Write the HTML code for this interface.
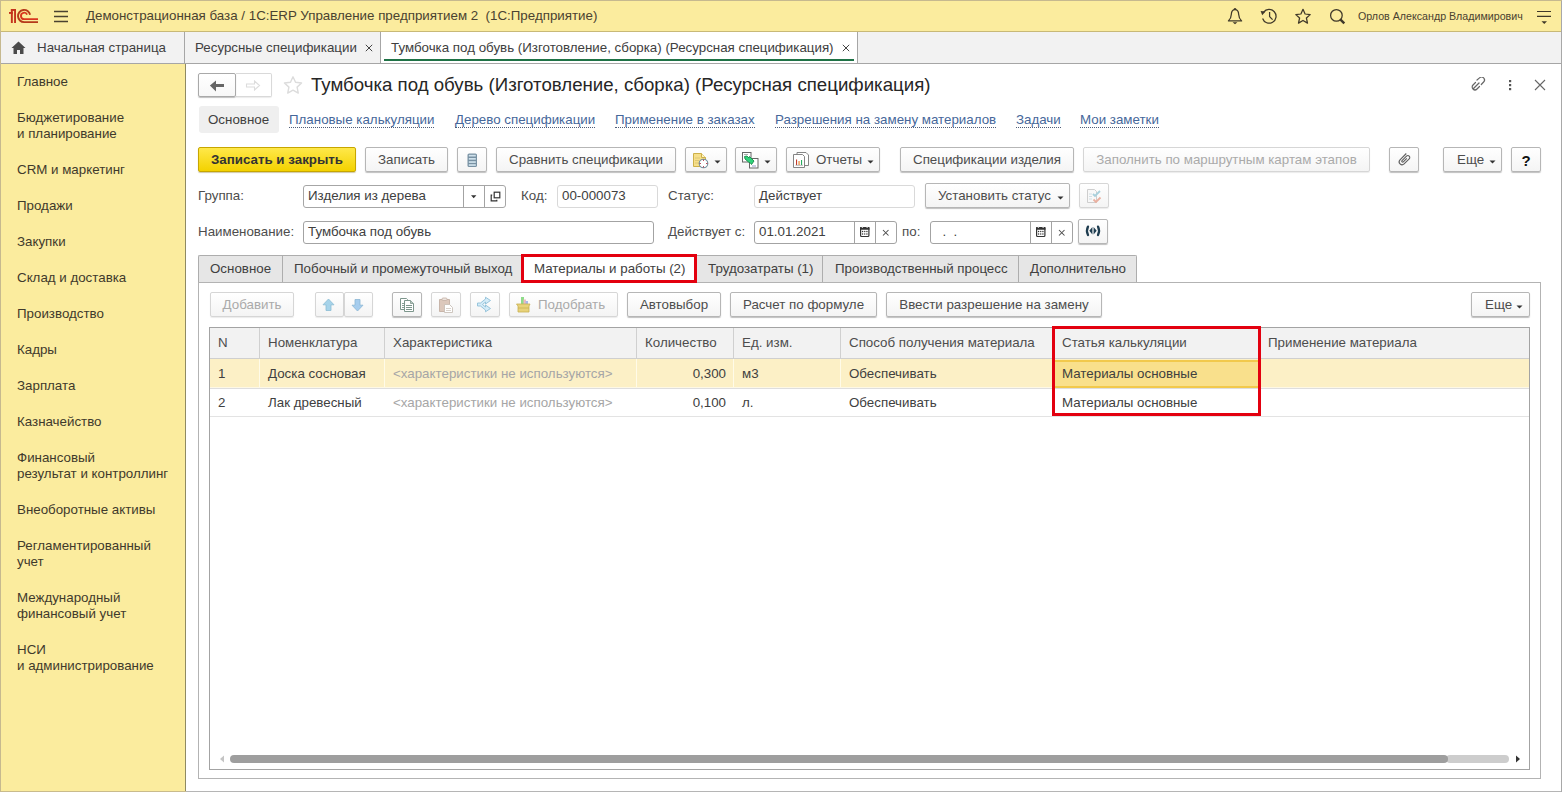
<!DOCTYPE html>
<html><head><meta charset="utf-8">
<style>
*{box-sizing:border-box;margin:0;padding:0}
html,body{width:1562px;height:792px;overflow:hidden;background:#fff}
body{font-family:"Liberation Sans",sans-serif;font-size:13.33px;color:#4d4d4d;position:relative}
.a{position:absolute;white-space:nowrap}
.hdr{left:0;top:0;width:1562px;height:32px;background:#fbec9e;border-bottom:1px solid #c8b977}
.tabs{left:0;top:32px;width:1562px;height:32px;background:#f2f2f2;border-bottom:1px solid #a6a6a6}
.side{left:0;top:64px;width:186px;height:728px;background:#fbec9e;border-right:1px solid #8f8a62}
.side .it{position:absolute;left:17px;margin-top:1px;line-height:16px;color:#3f3a2c}
.btn{position:absolute;height:25px;border:1px solid #b6b6b6;border-radius:2px;background:linear-gradient(#ffffff,#f4f4f4);box-shadow:0 1px 1px rgba(0,0,0,.25);color:#4d4d4d;text-align:center;line-height:23px;white-space:nowrap}
.btn.dis{color:#aaa;border-color:#d6d6d6;box-shadow:0 1px 1px rgba(0,0,0,.08)}
.inp{position:absolute;height:22px;border:1px solid #a6a6a6;border-radius:3px;background:#fff;line-height:20px;padding-left:4px;color:#404040;white-space:nowrap}
.lbl{position:absolute;line-height:22px;color:#4d4d4d;white-space:nowrap}
.lnk{position:absolute;line-height:15px;color:#46679a;border-bottom:1px dotted #4f5d78;white-space:nowrap}
.tab{position:absolute;top:255px;height:27px;background:#e6e6e6;border-top:1px solid #adadad;border-left:1px solid #adadad;line-height:25px;color:#404040;white-space:nowrap;padding-left:11px}
.th{position:absolute;top:328px;height:30px;line-height:29px;background:#f2f2f2;border-right:1px solid #d0d0d0;color:#4d4d4d;padding-left:8px;white-space:nowrap}
.td{position:absolute;line-height:28px;color:#404040;white-space:nowrap}
</style></head><body>

<!-- header -->
<div class="a hdr"></div>
<svg class="a" style="left:0;top:0" width="45" height="32" viewBox="0 0 45 32">
  <g fill="#c4331c">
    <rect x="10.9" y="9" width="1.9" height="14"/>
    <rect x="14.1" y="9" width="1.9" height="14"/>
    <rect x="10.9" y="9" width="5" height="1.9"/>
    <rect x="9" y="12" width="3.8" height="1.9"/>
  </g>
  <path d="M30.1,14.8 A6.1,6.1 0 1 0 24.1,22.1 H38" fill="none" stroke="#b53a1a" stroke-width="1.9"/>
  <path d="M27.1,14.6 A3.2,3.2 0 1 0 24.1,19.1 H38" fill="none" stroke="#d9361f" stroke-width="1.9"/>
</svg>
<svg class="a" style="left:54px;top:10px" width="15" height="13" viewBox="0 0 15 13">
  <g stroke="#4a4230" stroke-width="1.3"><path d="M0,1.5H14M0,6.5H14M0,11.5H14"/></g>
</svg>
<div class="a" style="left:86px;top:0;line-height:32px;color:#4a4230">Демонстрационная база / 1С:ERP Управление предприятием 2&nbsp; (1С:Предприятие)</div>

<!-- header right icons -->
<svg class="a" style="left:1226px;top:7px" width="130" height="19" viewBox="0 0 130 19">
  <g fill="none" stroke="#3f3829" stroke-width="1.25" stroke-linejoin="round">
    <path d="M9,2.6 C6.3,2.6 5.4,5 5.3,7.5 C5.2,10.5 4.6,12 2.4,13.9 H15.6 C13.4,12 12.8,10.5 12.7,7.5 C12.6,5 11.7,2.6 9,2.6 Z"/>
    <path d="M37.6,5.2 A6.9,6.9 0 1 1 36.6,11.5"/>
    <path d="M43.6,5 V9.6 L46.6,12.6"/>
    <path d="M77,2.3 L79.1,7 L84.2,7.6 L80.4,11 L81.5,16.1 L77,13.5 L72.5,16.1 L73.6,11 L69.8,7.6 L74.9,7 Z"/>
    <circle cx="110.4" cy="8.4" r="5.8"/>
  </g>
  <path d="M7.9,1.2 h2.2 v1.6 h-2.2z" fill="#3f3829"/>
  <path d="M6.6,15.3 h4.8 l-2.4,2z" fill="#3f3829"/>
  <path d="M34.6,4 L39.6,4.6 L36.2,8.3 Z" fill="#3f3829"/>
  <path d="M114.3,12.3 L118.3,16.3" stroke="#3f3829" stroke-width="2.4"/>
</svg>
<div class="a" style="left:1358px;top:0;line-height:32px;font-size:10.67px;color:#4a4230">Орлов Александр Владимирович</div>
<svg class="a" style="left:1536px;top:9px" width="16" height="16" viewBox="0 0 16 16">
  <g stroke="#3f3829" stroke-width="1.2"><path d="M1,2.5H15M1,7.4H15"/></g>
  <path d="M5.5,12.2 h5.5 l-2.75,2.8z" fill="#3f3829"/>
</svg>


<!-- tab bar -->
<div class="a tabs"></div>
<svg class="a" style="left:11px;top:41px" width="15" height="14" viewBox="0 0 15 14">
  <path d="M7.5,0.5 L14.5,7 H12.5 V13 H9 V9 H6 V13 H2.5 V7 H0.5 Z" fill="#4b4b4b"/>
</svg>
<div class="a" style="left:37px;top:32px;line-height:31px;color:#404040">Начальная страница</div>
<div class="a" style="left:184px;top:32px;width:1px;height:31px;background:#a6a6a6"></div>
<div class="a" style="left:195px;top:32px;line-height:31px;color:#404040">Ресурсные спецификации</div>
<svg class="a" style="left:365px;top:44px" width="8" height="8" viewBox="0 0 8 8"><path d="M0.8,0.8 L7.2,7.2 M7.2,0.8 L0.8,7.2" stroke="#444" stroke-width="1"/></svg>
<div class="a" style="left:380px;top:32px;width:1px;height:31px;background:#a6a6a6"></div>
<div class="a" style="left:381px;top:32px;width:476px;height:31px;background:#fff"></div>
<div class="a" style="left:391px;top:32px;line-height:31px;color:#404040">Тумбочка под обувь (Изготовление, сборка) (Ресурсная спецификация)</div>
<svg class="a" style="left:842px;top:44px" width="8" height="8" viewBox="0 0 8 8"><path d="M0.8,0.8 L7.2,7.2 M7.2,0.8 L0.8,7.2" stroke="#444" stroke-width="1"/></svg>
<div class="a" style="left:384px;top:59px;width:470px;height:2px;background:#1f7246"></div>
<div class="a" style="left:857px;top:32px;width:1px;height:31px;background:#a6a6a6"></div>

<!-- sidebar -->
<div class="a side">
  <div class="it" style="top:9px">Главное</div>
  <div class="it" style="top:45px">Бюджетирование<br>и планирование</div>
  <div class="it" style="top:97px">CRM и маркетинг</div>
  <div class="it" style="top:133px">Продажи</div>
  <div class="it" style="top:169px">Закупки</div>
  <div class="it" style="top:205px">Склад и доставка</div>
  <div class="it" style="top:241px">Производство</div>
  <div class="it" style="top:277px">Кадры</div>
  <div class="it" style="top:313px">Зарплата</div>
  <div class="it" style="top:349px">Казначейство</div>
  <div class="it" style="top:385px">Финансовый<br>результат и контроллинг</div>
  <div class="it" style="top:437px">Внеоборотные активы</div>
  <div class="it" style="top:473px">Регламентированный<br>учет</div>
  <div class="it" style="top:525px">Международный<br>финансовый учет</div>
  <div class="it" style="top:577px">НСИ<br>и администрирование</div>
</div>

<!-- FORM -->

<!-- nav buttons -->
<div class="a" style="left:236px;top:73px;width:36px;height:24px;border:1px solid #d9d9d9;border-left:none;border-radius:0 2px 2px 0;background:#fff;box-shadow:0 1px 1px rgba(0,0,0,.08)"></div>
<div class="a" style="left:198px;top:73px;width:38px;height:24px;border:1px solid #a9a9a9;border-radius:2px;background:linear-gradient(#fff,#f7f7f7);box-shadow:0 1px 1px rgba(0,0,0,.25)"></div>
<svg class="a" style="left:205px;top:77px" width="24" height="18" viewBox="0 0 24 18"><path d="M4.9,8.5 L11,3.6 V6.9 H19 V9.9 H11 V14.6 Z" fill="#666"/></svg>
<svg class="a" style="left:242px;top:77px" width="24" height="18" viewBox="0 0 24 18"><path d="M4.5,7 H12.5 V4 L17.5,8.5 L12.5,13 V10 H4.5 Z" fill="none" stroke="#dcdcdc" stroke-width="1.1"/></svg>
<svg class="a" style="left:283px;top:75px" width="20" height="21" viewBox="0 0 20 21"><path d="M10.00,1.80 L12.53,7.32 L18.56,8.02 L14.09,12.13 L15.29,18.08 L10.00,15.10 L4.71,18.08 L5.91,12.13 L1.44,8.02 L7.47,7.32 Z" fill="none" stroke="#dcdcdc" stroke-width="1.4" stroke-linejoin="round"/></svg>
<div class="a" style="left:311px;top:70px;line-height:30px;font-size:18.67px;color:#262626">Тумбочка под обувь (Изготовление, сборка) (Ресурсная спецификация)</div>
<svg class="a" style="left:1470px;top:77px" width="20" height="18" viewBox="0 0 20 18"><g fill="none" stroke="#666" stroke-width="1.2" stroke-linecap="round"><path d="M3.5,11.5 L9,6"/><path d="M7,3 L9.5,0.9 A2.6,2.6 0 0 1 13.6,5 L11.3,7.5"/><path d="M5.5,5.5 L3,8 A2.6,2.6 0 0 0 7,12 L9.5,9.5"/></g></svg>
<svg class="a" style="left:1506px;top:77px" width="8" height="16" viewBox="0 0 8 16"><g fill="#555"><rect x="3" y="3" width="2.2" height="2.2"/><rect x="3" y="7" width="2.2" height="2.2"/><rect x="3" y="11" width="2.2" height="2.2"/></g></svg>
<svg class="a" style="left:1532px;top:77px" width="16" height="16" viewBox="0 0 16 16"><path d="M3,3 L13,13 M13,3 L3,13" stroke="#666" stroke-width="1.1"/></svg>

<!-- links row -->
<div class="a" style="left:199px;top:106px;width:80px;height:27px;background:#efefef;border-radius:3px"></div>
<div class="a" style="left:208px;top:106px;line-height:27px;color:#404040">Основное</div>
<div class="lnk" style="left:289px;top:112px">Плановые калькуляции</div>
<div class="lnk" style="left:455px;top:112px">Дерево спецификации</div>
<div class="lnk" style="left:615px;top:112px">Применение в заказах</div>
<div class="lnk" style="left:775px;top:112px">Разрешения на замену материалов</div>
<div class="lnk" style="left:1016px;top:112px">Задачи</div>
<div class="lnk" style="left:1080px;top:112px">Мои заметки</div>

<!-- command bar -->
<div class="btn" style="left:198px;top:147px;width:158px;background:linear-gradient(#ffe84a,#f3d200);border-color:#c7a600;color:#333;font-weight:bold;box-shadow:0 1px 1px rgba(120,100,0,.35)">Записать и закрыть</div>
<div class="btn" style="left:365px;top:147px;width:83px">Записать</div>
<div class="btn" style="left:457px;top:147px;width:30px"></div>
<svg class="a" style="left:467px;top:153px" width="11" height="15" viewBox="0 0 11 15"><rect x="0.5" y="0.5" width="9.5" height="13.5" rx="1.6" fill="#7891a3"/><g fill="#cfe1ec"><rect x="1.8" y="1.8" width="7" height="1.7"/><rect x="1.8" y="5" width="7" height="1.7"/><rect x="1.8" y="8.2" width="7" height="1.7"/><rect x="1.8" y="11.2" width="7" height="1.7"/></g></svg>
<div class="btn" style="left:496px;top:147px;width:180px">Сравнить спецификации</div>
<div class="btn" style="left:685px;top:147px;width:42px"></div>
<svg class="a" style="left:692px;top:152px" width="18" height="18" viewBox="0 0 18 18"><path d="M1.5,1.5 H9.5 L13.5,5.5 V14.5 H1.5 Z" fill="#f6df8a" stroke="#cdb04a" stroke-width="1"/><path d="M9.5,1.5 V5.5 H13.5" fill="#fff3c0" stroke="#cdb04a" stroke-width="1"/><g stroke="#d8c070" stroke-width="0.8"><path d="M3,6H8M3,8.5H7M3,11H7"/></g><circle cx="11.5" cy="11.5" r="4.3" fill="#fff" stroke="#6f8d9c" stroke-width="1.1"/><g fill="#b0283a"><rect x="11" y="7.6" width="1" height="1.2"/><rect x="11" y="14.2" width="1" height="1.2"/><rect x="7.6" y="11" width="1.2" height="1"/><rect x="14.2" y="11" width="1.2" height="1"/></g></svg>
<svg class="a" style="left:714px;top:160px" width="7" height="4" viewBox="0 0 7 4"><path d="M0.5,0.5 H6.5 L3.5,3.5Z" fill="#333"/></svg>
<div class="btn" style="left:735px;top:147px;width:42px"></div>
<svg class="a" style="left:741px;top:151px" width="18" height="18" viewBox="0 0 18 18"><rect x="1.5" y="1.5" width="8.5" height="9.5" fill="#fff" stroke="#666" stroke-width="1"/><path d="M3,3.5H7" stroke="#999" stroke-width="0.8"/><rect x="8.5" y="7.5" width="8.5" height="9.5" fill="#fff" stroke="#666" stroke-width="1"/><path d="M11,15H15" stroke="#8080c0" stroke-width="0.8"/><path d="M3.5,5.5 L6,5 L8,7 L8.5,5.5 L13,10 L10.5,13.5 L9.5,12 L7.5,11 L4,8 Z" fill="#2fd27a" stroke="#1a8a4a" stroke-width="0.9"/></svg>
<svg class="a" style="left:764px;top:160px" width="7" height="4" viewBox="0 0 7 4"><path d="M0.5,0.5 H6.5 L3.5,3.5Z" fill="#333"/></svg>
<div class="btn" style="left:786px;top:147px;width:94px;text-align:left;padding-left:29px">Отчеты</div>
<svg class="a" style="left:792px;top:151px" width="18" height="18" viewBox="0 0 18 18"><path d="M5,1.5 H14 L16.5,4 V14.5 H5 Z" fill="#fff" stroke="#777" stroke-width="0.9"/><path d="M1.5,3.5 H10.5 L12.5,5.5 V16.5 H1.5 Z" fill="#fff" stroke="#777" stroke-width="0.9"/><rect x="4" y="8.5" width="1.1" height="5.5" fill="#c0392b"/><rect x="6.5" y="10" width="1.1" height="4" fill="#e67e22"/><rect x="9" y="9" width="1.1" height="5" fill="#27ae60"/><path d="M3.5,14.3 H11" stroke="#888" stroke-width="0.6"/></svg>
<svg class="a" style="left:867px;top:160px" width="7" height="4" viewBox="0 0 7 4"><path d="M0.5,0.5 H6.5 L3.5,3.5Z" fill="#333"/></svg>
<div class="btn" style="left:900px;top:147px;width:174px">Спецификации изделия</div>
<div class="btn dis" style="left:1083px;top:147px;width:287px">Заполнить по маршрутным картам этапов</div>
<div class="btn" style="left:1389px;top:147px;width:30px"></div>
<svg class="a" style="left:1397px;top:151px" width="16" height="16" viewBox="0 0 16 16"><path d="M10.3,1 L4,7.3 A2.9,2.9 0 0 0 8.1,11.4 L13.2,6.3 A1.9,1.9 0 0 0 10.5,3.6 L6,8.1 A0.9,0.9 0 0 0 7.3,9.4 L10.8,5.9" fill="none" stroke="#5f5f5f" stroke-width="1.1" transform="translate(-1,1.5)"/></svg>
<div class="btn" style="left:1443px;top:147px;width:59px;text-align:left;padding-left:13px">Еще</div>
<svg class="a" style="left:1489px;top:160px" width="7" height="4" viewBox="0 0 7 4"><path d="M0.5,0.5 H6.5 L3.5,3.5Z" fill="#333"/></svg>
<div class="btn" style="left:1511px;top:147px;width:30px;color:#111;font-weight:bold;font-size:15px;line-height:25px">?</div>

<!-- fields -->
<div class="lbl" style="left:198px;top:185px">Группа:</div>
<div class="inp" style="left:303px;top:185px;width:203px;height:23px">Изделия из дерева</div>
<div class="a" style="left:463px;top:186px;width:1px;height:21px;background:#a3a3a3"></div>
<div class="a" style="left:484px;top:186px;width:1px;height:21px;background:#a3a3a3"></div>
<svg class="a" style="left:471px;top:195px" width="6" height="4" viewBox="0 0 6 4"><path d="M0,0.2 H5.4 L2.7,3.2Z" fill="#333"/></svg>
<svg class="a" style="left:490px;top:191px" width="11" height="11" viewBox="0 0 11 11"><rect x="4.2" y="1.2" width="5.6" height="5.6" fill="none" stroke="#333" stroke-width="1.2"/><path d="M2.2,4.2 H1.2 V9.8 H6.8 V8.8" fill="none" stroke="#333" stroke-width="1.2"/></svg>
<div class="lbl" style="left:521px;top:185px">Код:</div>
<div class="inp" style="left:557px;top:185px;width:101px;height:23px;border-color:#d9d9d9">00-000073</div>
<div class="lbl" style="left:668px;top:185px">Статус:</div>
<div class="inp" style="left:754px;top:185px;width:161px;height:23px;border-color:#d9d9d9">Действует</div>
<div class="btn" style="left:925px;top:183px;width:145px;text-align:left;padding-left:12px">Установить статус</div>
<svg class="a" style="left:1057px;top:196px" width="7" height="4" viewBox="0 0 7 4"><path d="M0.5,0.5 H6.5 L3.5,3.5Z" fill="#333"/></svg>
<div class="btn dis" style="left:1079px;top:183px;width:30px"></div>
<svg class="a" style="left:1086px;top:188px" width="16" height="17" viewBox="0 0 16 17"><path d="M1.5,1.5 H8.5 L10.5,3.5 V14.5 H1.5Z" fill="#f8f8f8" stroke="#c8c8c8" stroke-width="0.9"/><g stroke="#c8d8e0" stroke-width="0.8"><path d="M3,6H6M3,8.5H6M3,11H6"/></g><path d="M7,6 L9,8 L14,3" fill="none" stroke="#a8d0dc" stroke-width="1.8"/><path d="M7.5,11.5 L10,14 L14.5,9.5" fill="none" stroke="#eab0a0" stroke-width="1.8"/></svg>

<div class="lbl" style="left:198px;top:221px">Наименование:</div>
<div class="inp" style="left:303px;top:221px;width:351px;height:23px;border-color:#a3a3a3">Тумбочка под обувь</div>
<div class="lbl" style="left:668px;top:221px">Действует с:</div>
<div class="inp" style="left:754px;top:221px;width:143px;height:23px;border-color:#a3a3a3">01.01.2021</div>
<div class="a" style="left:854px;top:222px;width:1px;height:21px;background:#a3a3a3"></div>
<div class="a" style="left:875px;top:222px;width:1px;height:21px;background:#a3a3a3"></div>
<svg class="a" style="left:859px;top:226px" width="11" height="12" viewBox="0 0 11 12"><rect x="1.6" y="1.6" width="8.3" height="8.9" rx="1" fill="#fff" stroke="#333" stroke-width="1.2"/><rect x="1" y="1" width="9.5" height="2.8" rx="0.6" fill="#333"/><circle cx="3.4" cy="1.3" r="0.75" fill="#ddd"/><circle cx="8.1" cy="1.3" r="0.75" fill="#ddd"/><g fill="#333"><circle cx="3.6" cy="5.5" r="0.7"/><circle cx="5.75" cy="5.5" r="0.7"/><circle cx="7.9" cy="5.5" r="0.7"/><circle cx="3.6" cy="8" r="0.7"/><circle cx="5.75" cy="8" r="0.7"/><circle cx="7.9" cy="8" r="0.7"/></g></svg>
<svg class="a" style="left:882px;top:229px" width="8" height="8" viewBox="0 0 8 8"><path d="M1,1 L6.5,6.5 M6.5,1 L1,6.5" stroke="#4a4a4a" stroke-width="1.05"/></svg>
<div class="lbl" style="left:902px;top:221px">по:</div>
<div class="inp" style="left:930px;top:221px;width:143px;height:23px;border-color:#a3a3a3">&nbsp; .&nbsp; .</div>
<div class="a" style="left:1030px;top:222px;width:1px;height:21px;background:#a3a3a3"></div>
<div class="a" style="left:1051px;top:222px;width:1px;height:21px;background:#a3a3a3"></div>
<svg class="a" style="left:1035px;top:226px" width="11" height="12" viewBox="0 0 11 12"><rect x="1.6" y="1.6" width="8.3" height="8.9" rx="1" fill="#fff" stroke="#333" stroke-width="1.2"/><rect x="1" y="1" width="9.5" height="2.8" rx="0.6" fill="#333"/><circle cx="3.4" cy="1.3" r="0.75" fill="#ddd"/><circle cx="8.1" cy="1.3" r="0.75" fill="#ddd"/><g fill="#333"><circle cx="3.6" cy="5.5" r="0.7"/><circle cx="5.75" cy="5.5" r="0.7"/><circle cx="7.9" cy="5.5" r="0.7"/><circle cx="3.6" cy="8" r="0.7"/><circle cx="5.75" cy="8" r="0.7"/><circle cx="7.9" cy="8" r="0.7"/></g></svg>
<svg class="a" style="left:1058px;top:229px" width="8" height="8" viewBox="0 0 8 8"><path d="M1,1 L6.5,6.5 M6.5,1 L1,6.5" stroke="#4a4a4a" stroke-width="1.05"/></svg>
<div class="btn" style="left:1078px;top:219px;width:30px"></div>
<svg class="a" style="left:1084px;top:225px" width="18" height="12" viewBox="0 0 18 12"><g fill="none" stroke="#1f3d50" stroke-width="2.3" stroke-linecap="round"><path d="M4,1.6 Q1.9,5.75 4,10"/><path d="M14,1.6 Q16.1,5.75 14,10"/></g><path d="M8.4,2 L5.3,5.75 L8.4,9.5 Z M9.6,2 L12.7,5.75 L9.6,9.5 Z" fill="#1f3d50"/></svg>

<!-- page tabs -->
<div class="a" style="left:198px;top:282px;width:1343px;height:497px;border:1px solid #b3b3b3"></div>
<div class="tab" style="left:198px;width:84px;border-radius:2px 0 0 0">Основное</div>
<div class="tab" style="left:282px;width:240px">Побочный и промежуточный выход</div>
<div class="tab" style="left:522px;width:174px;background:#fff;height:28px">Материалы и работы (2)</div>
<div class="tab" style="left:696px;width:126px">Трудозатраты (1)</div>
<div class="tab" style="left:822px;width:196px;padding-left:12px">Производственный процесс</div>
<div class="tab" style="left:1018px;width:119px;border-right:1px solid #adadad;border-radius:0 2px 0 0">Дополнительно</div>
<div class="a" style="left:521px;top:254px;width:176px;height:29px;border:3px solid #e3000f"></div>

<!-- table toolbar -->
<div class="btn dis" style="left:210px;top:292px;width:84px">Добавить</div>
<div class="btn dis" style="left:315px;top:292px;width:29px"></div>
<div class="btn dis" style="left:344px;top:292px;width:29px"></div>
<svg class="a" style="left:322px;top:298px" width="14" height="14" viewBox="0 0 14 14"><path d="M6.5,1 L12,6.8 H9 V12.5 H4 V6.8 H1 Z" fill="#a6d3ea" stroke="#8cbcd4" stroke-width="0.8"/></svg>
<svg class="a" style="left:351px;top:298px" width="14" height="14" viewBox="0 0 14 14"><path d="M6.5,13 L12,7.2 H9 V1.5 H4 V7.2 H1 Z" fill="#a6cdee" stroke="#8cb6d4" stroke-width="0.8"/></svg>
<div class="btn" style="left:392px;top:292px;width:30px"></div>
<svg class="a" style="left:399px;top:297px" width="16" height="16" viewBox="0 0 16 16"><path d="M1.5,1.5 H7.5 L8.5,2.5 V12.5 H1.5 Z" fill="#fff" stroke="#7d968c" stroke-width="1"/><g stroke="#7d968c" stroke-width="0.9"><path d="M3,6.5H5M3,8.5H5M3,10.5H5"/></g><path d="M5.5,3.5 H11.5 L14.5,6.5 V14.5 H5.5 Z" fill="#fff" stroke="#7d968c" stroke-width="1"/><path d="M11.5,3.5 V6.5 H14.5" fill="#b8c8c0" stroke="#7d968c" stroke-width="0.8"/><g stroke="#7d968c" stroke-width="1"><path d="M7,8.5H13M7,10.5H13M7,12.5H13"/></g></svg>
<div class="btn dis" style="left:431px;top:292px;width:30px"></div>
<svg class="a" style="left:438px;top:297px" width="16" height="16" viewBox="0 0 16 16"><path d="M1.5,2.5 H11.5 V14.5 H1.5 Z" fill="#dcc8bc" stroke="#c4b0a4" stroke-width="0.9"/><rect x="4" y="1" width="5" height="2.5" rx="1" fill="#ece4de" stroke="#c4b0a4" stroke-width="0.8"/><path d="M6.5,7.5 H11.5 L14.5,10.5 V15.5 H6.5 Z" fill="#fff" stroke="#c8c0b8" stroke-width="0.9"/><g stroke="#d0c8c0" stroke-width="0.8"><path d="M8,11.5H13M8,13.5H13"/></g></svg>
<div class="btn dis" style="left:470px;top:292px;width:30px"></div>
<svg class="a" style="left:476px;top:296px" width="16" height="17" viewBox="0 0 16 17"><path d="M1.5,7 H4.5 L9.5,3 V1.2 L14.5,4.5 L9.5,8 V6 L6.5,8.5 L9.5,11 V9 L14.5,12.5 L9.5,15.8 V14 L4.5,10 H1.5 Z" fill="#d4ecf8" stroke="#8fbfd8" stroke-width="0.9" stroke-linejoin="round"/></svg>
<div class="btn dis" style="left:509px;top:292px;width:109px;text-align:left;padding-left:28px">Подобрать</div>
<svg class="a" style="left:515px;top:296px" width="17" height="18" viewBox="0 0 17 18"><rect x="6" y="1" width="3" height="9" fill="#8fdc8a"/><rect x="8.5" y="3.5" width="2.5" height="7" fill="#f0b8c0"/><rect x="10.5" y="5" width="2.5" height="6" fill="#a8b8ec"/><path d="M1.5,8 H15 L14,10 V16 H3 V10 Z" fill="#e8d27a" stroke="#c8b050" stroke-width="0.8"/><path d="M3,12 H14" stroke="#c8b050" stroke-width="0.8"/></svg>
<div class="btn" style="left:627px;top:292px;width:94px">Автовыбор</div>
<div class="btn" style="left:730px;top:292px;width:147px">Расчет по формуле</div>
<div class="btn" style="left:886px;top:292px;width:216px">Ввести разрешение на замену</div>
<div class="btn" style="left:1471px;top:292px;width:59px;text-align:left;padding-left:13px">Еще</div>
<svg class="a" style="left:1516px;top:305px" width="7" height="4" viewBox="0 0 7 4"><path d="M0.5,0.5 H6.5 L3.5,3.5Z" fill="#333"/></svg>

<!-- table -->
<div class="a" style="left:209px;top:327px;width:1321px;height:443px;border:1px solid #a3a3a3"></div>
<div class="a" style="left:210px;top:328px;width:1319px;height:31px;background:#f2f2f2;border-bottom:1px solid #cfcfcf"></div>
<div class="th" style="left:210px;width:50px">N</div>
<div class="th" style="left:260px;width:125px">Номенклатура</div>
<div class="th" style="left:385px;width:252px">Характеристика</div>
<div class="th" style="left:637px;width:97px">Количество</div>
<div class="th" style="left:734px;width:107px">Ед. изм.</div>
<div class="th" style="left:841px;width:213px">Способ получения материала</div>
<div class="th" style="left:1054px;width:206px">Статья калькуляции</div>
<div class="th" style="left:1260px;width:269px;border-right:none">Применение материала</div>

<div class="a" style="left:210px;top:359px;width:1319px;height:28px;background:#fcf0c6"></div>
<div class="a" style="left:210px;top:387px;width:1319px;height:1px;background:#fdf8e6"></div>
<div class="a" style="left:210px;top:388px;width:1319px;height:1px;background:#dedede"></div>
<div class="a" style="left:259px;top:359px;width:1px;height:28px;background:#fffbe8"></div>
<div class="a" style="left:384px;top:359px;width:1px;height:28px;background:#fffbe8"></div>
<div class="a" style="left:636px;top:359px;width:1px;height:28px;background:#fffbe8"></div>
<div class="a" style="left:733px;top:359px;width:1px;height:28px;background:#fffbe8"></div>
<div class="a" style="left:840px;top:359px;width:1px;height:28px;background:#fffbe8"></div>
<div class="a" style="left:210px;top:416px;width:1319px;height:1px;background:#e3e3e3"></div>
<div class="a" style="left:1055px;top:360px;width:204px;height:28px;background:#f9e08c;border-top:2px solid #f2c94c;border-bottom:2px solid #f2c94c"></div>

<div class="td" style="left:218px;top:360px">1</div>
<div class="td" style="left:268px;top:360px">Доска сосновая</div>
<div class="td" style="left:393px;top:360px;color:#a6a6a6">&lt;характеристики не используются&gt;</div>
<div class="td" style="left:637px;top:360px;width:89px;text-align:right">0,300</div>
<div class="td" style="left:742px;top:360px">м3</div>
<div class="td" style="left:849px;top:360px">Обеспечивать</div>
<div class="td" style="left:1062px;top:360px">Материалы основные</div>

<div class="td" style="left:218px;top:389px">2</div>
<div class="td" style="left:268px;top:389px">Лак древесный</div>
<div class="td" style="left:393px;top:389px;color:#a6a6a6">&lt;характеристики не используются&gt;</div>
<div class="td" style="left:637px;top:389px;width:89px;text-align:right">0,100</div>
<div class="td" style="left:742px;top:389px">л.</div>
<div class="td" style="left:849px;top:389px">Обеспечивать</div>
<div class="td" style="left:1062px;top:389px">Материалы основные</div>

<div class="a" style="left:1052px;top:326px;width:209px;height:90px;border:3px solid #e3000f"></div>

<!-- scrollbar -->
<svg class="a" style="left:219px;top:755px" width="6" height="8" viewBox="0 0 6 8"><path d="M5,0.5 L1,4 L5,7.5Z" fill="#c4c4c4"/></svg>
<div class="a" style="left:1446px;top:755px;width:63px;height:8px;background:#cdcdcd;border-radius:4px"></div>
<div class="a" style="left:230px;top:755px;width:1218px;height:8px;background:#9e9e9e;border-radius:4px"></div>
<svg class="a" style="left:1515px;top:755px" width="6" height="8" viewBox="0 0 6 8"><path d="M1,0.5 L5,4 L1,7.5Z" fill="#333"/></svg>

<!-- window borders -->
<div class="a" style="left:186px;top:791px;width:1376px;height:1px;background:#b5b5b5"></div>
<div class="a" style="left:0;top:791px;width:186px;height:1px;background:#c9bb8c"></div>
<div class="a" style="left:1561px;top:0;width:1px;height:792px;background:#a8a8a8"></div>
<div class="a" style="left:0;top:0;width:1562px;height:1px;background:#c6b98f"></div>
<div class="a" style="left:0;top:0;width:1px;height:792px;background:#c6b98f"></div>


</body></html>
